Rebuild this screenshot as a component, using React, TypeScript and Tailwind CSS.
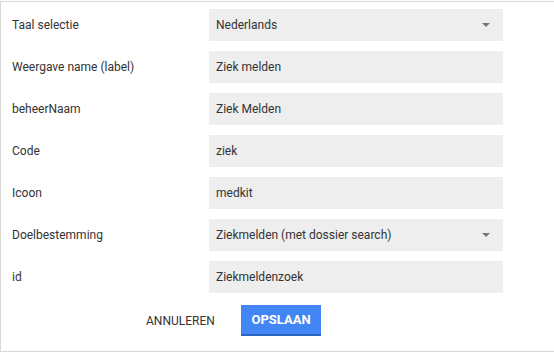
import React from "react";

const rows: { label: string; value: string; select?: boolean }[] = [
  { label: "Taal selectie", value: "Nederlands", select: true },
  { label: "Weergave name (label)", value: "Ziek melden" },
  { label: "beheerNaam", value: "Ziek Melden" },
  { label: "Code", value: "ziek" },
  { label: "Icoon", value: "medkit" },
  { label: "Doelbestemming", value: "Ziekmelden (met dossier search)", select: true },
  { label: "id", value: "Ziekmeldenzoek" },
];

export default function App() {
  return (
    <div
      className="w-[560px] h-[351px] mt-px border-l border-t border-b border-[#d8d8d8] bg-white text-[12px] text-[#333]"
      style={{ fontFamily: "Roboto, 'Liberation Sans', sans-serif" }}
    >
      <div className="flex flex-col gap-[10px] pt-[7px]">
        {rows.map((r) => (
          <div key={r.label} className="flex items-center h-[32px]">
            <div className="w-[208px] pl-[11px]">{r.label}</div>
            <div className="w-[294px] h-[32px] bg-[#eeeeee] flex items-center pl-[7px] pr-[12px]">
              <span className="flex-1">{r.value}</span>
              {r.select && (
                <svg width="8" height="4" viewBox="0 0 8 4" className="mr-px">
                  <polygon points="0,0 8,0 4,4" fill="#757575" />
                </svg>
              )}
            </div>
          </div>
        ))}
      </div>
      <div className="flex items-center mt-[12px]">
        <div className="w-[145px]" />
        <button className="w-[69px] h-[31px] text-[12px] text-[#333] text-left">ANNULEREN</button>
        <div className="w-[26px]" />
        <button className="w-[80px] h-[31px] bg-[#4285f4] text-white font-bold text-[13px] border-b-2 border-[#2a65c4]">
          OPSLAAN
        </button>
      </div>
    </div>
  );
}
